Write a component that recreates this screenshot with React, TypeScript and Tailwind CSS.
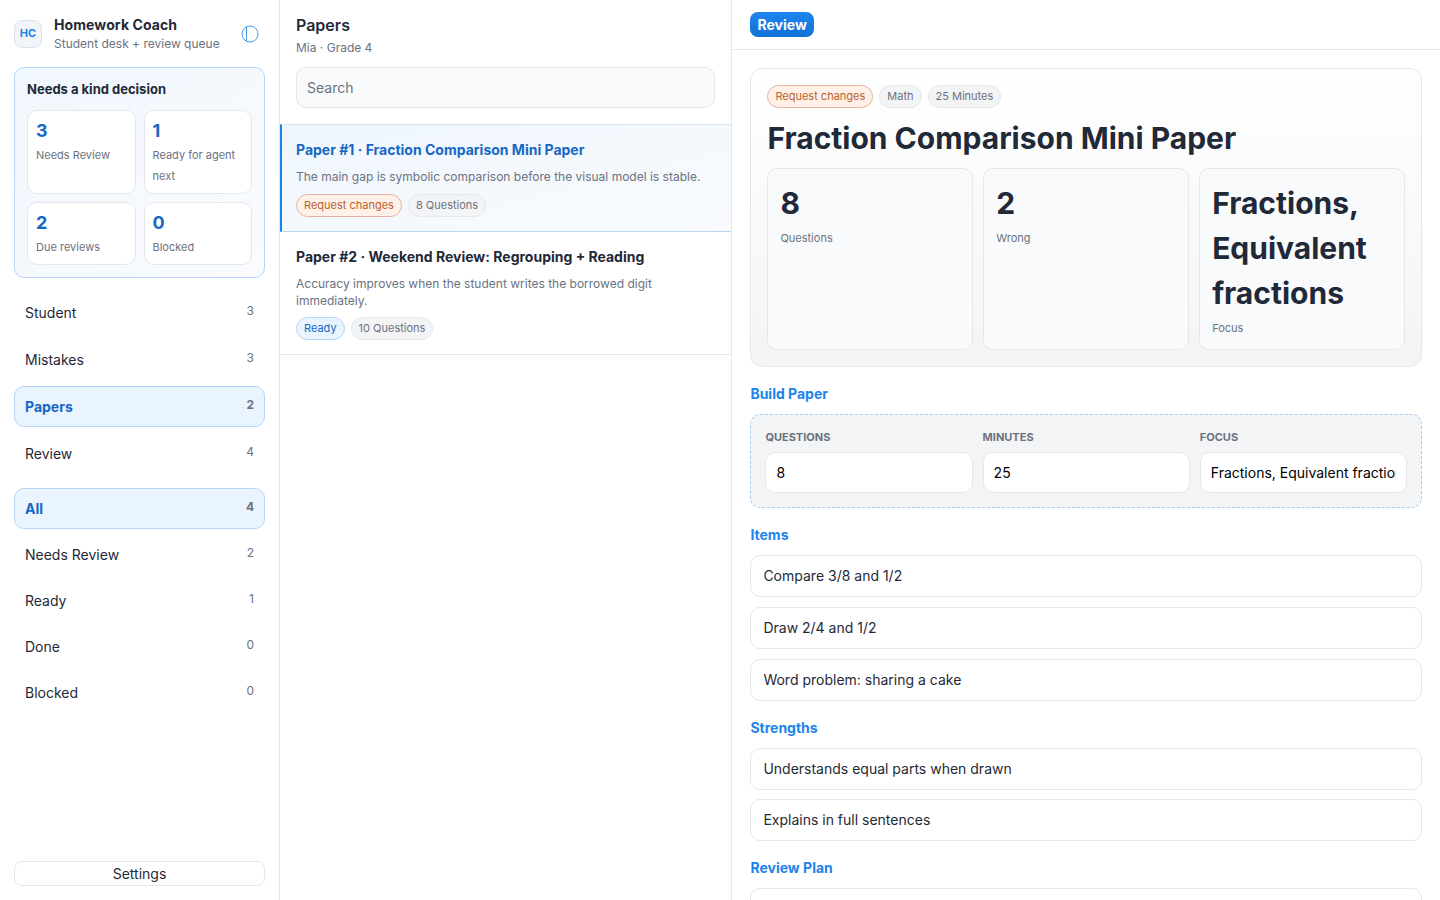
import React from "react";

function Pill({ children, tone = "gray" }: { children: React.ReactNode; tone?: "gray" | "orange" | "blue" }) {
  const cls =
    tone === "orange"
      ? "border-[#e3b3a0] bg-[#fff1e8] text-[#b8622f]"
      : tone === "blue"
        ? "border-[#b5d6f6] bg-[#eaf4fe] text-[#1668c4]"
        : "border-[#e5e7eb] bg-[#f3f4f6] text-[#6b7280]";
  return <span className={`inline-flex h-[23px] items-center rounded-full border px-[7px] text-[11px] leading-none ${cls}`}>{children}</span>;
}

function Stat({ n, label, tall = false }: { n: string; label: string; tall?: boolean }) {
  return (
    <div className={`rounded-[10px] border border-[#e5e7eb] bg-white px-2 pt-[7px] ${tall ? "h-[84px]" : "h-[63px]"}`}>
      <div className="text-[18px] font-bold leading-[26px] text-[#1668c4]">{n}</div>
      <div className="mt-[1px] text-[11px] leading-[21px] text-[#6b7280]">{label}</div>
    </div>
  );
}

function Nav({ label, count, active = false, small = false }: { label: string; count: number; active?: boolean; small?: boolean }) {
  return (
    <div
      className={`flex items-start justify-between rounded-[10px] border px-[10px] ${small ? "h-[40px] pt-[8px]" : "h-[41px] pt-[9px]"} ${
        active ? "border-[#b5d6f6] bg-[#eaf4fe]" : "border-transparent"
      }`}
    >
      <span className={`text-[14px] leading-[21px] ${active ? "font-bold text-[#1668c4]" : "text-[#1f2937]"}`}>{label}</span>
      <span className={`text-[12px] leading-[18px] text-[#6b7280] ${active ? "font-bold" : ""}`}>{count}</span>
    </div>
  );
}

function Metric({ value, label }: { value: string; label: string }) {
  return (
    <div className="rounded-[10px] border border-[#e5e7eb] bg-[#f9fafb] px-[12px] pb-[12px] pt-[12px]">
      <div className="text-[30px] font-bold leading-[45px] text-[#1f2937]">{value}</div>
      <div className="mt-[3px] text-[11px] leading-[18px] text-[#6b7280]">{label}</div>
    </div>
  );
}

function Field({ label, value }: { label: string; value: string }) {
  return (
    <div className="min-w-0">
      <div className="mb-[6px] text-[11px] font-bold uppercase leading-[17px] text-[#6b7280]">{label}</div>
      <input
        readOnly
        value={value}
        className="h-[41px] w-full rounded-[10px] border border-[#e5e7eb] bg-white px-[10px] text-[14px] text-black outline-none"
      />
    </div>
  );
}

function Heading({ children }: { children: React.ReactNode }) {
  return <div className="mb-[10px] mt-[17px] text-[14px] font-bold leading-[20px] text-[#1c84ec]">{children}</div>;
}

function Row({ children }: { children?: React.ReactNode }) {
  return (
    <div className="flex h-[42px] shrink-0 items-center rounded-[10px] border border-[#e5e7eb] bg-white px-[12px] pb-[2px] text-[14px] text-[#1f2937]">
      {children}
    </div>
  );
}

export default function App() {
  return (
    <div className="flex h-[900px] w-[1440px] overflow-hidden bg-white font-['Inter',sans-serif] text-[#1f2937]">
      {/* Sidebar */}
      <aside className="flex w-[280px] shrink-0 flex-col border-r border-[#e5e7eb] p-[14px]">
        <div className="flex h-[39px] items-center">
          <div className="flex h-[28px] w-[28px] shrink-0 items-center justify-center rounded-[8px] border border-[#d7e3ef] bg-[#f1f5f9] text-[11px] font-bold text-[#1f82e8]">
            HC
          </div>
          <div className="ml-[12px] min-w-0 flex-1">
            <div className="text-[14px] font-bold leading-[21px] tracking-[0.1px] text-[#1f2937]">Homework Coach</div>
            <div className="text-[12px] leading-[18px] text-[#6b7280]">Student desk + review queue</div>
          </div>
          <svg width="18" height="18" viewBox="0 0 18 18" fill="none" stroke="#4a9ae6" strokeWidth="1" className="mr-[6.5px]">
            <circle cx="9" cy="9" r="8" />
            <line x1="5.5" y1="1.8" x2="5.5" y2="16.2" />
          </svg>
        </div>

        <div className="mt-[14px] rounded-[10px] border border-[#b5d6f6] bg-gradient-to-br from-[#f1f7fe] to-[#f9fbfe] p-3">
          <div className="text-[13px] font-bold leading-[19px] text-[#1f2937]">Needs a kind decision</div>
          <div className="mt-[11px] grid grid-cols-2 gap-2">
            <Stat n="3" label="Needs Review" tall />
            <Stat n="1" label="Ready for agent next" tall />
            <Stat n="2" label="Due reviews" />
            <Stat n="0" label="Blocked" />
          </div>
        </div>

        <nav className="mt-[14px] flex flex-col gap-[6px]">
          <Nav label="Student" count={3} />
          <Nav label="Mistakes" count={3} />
          <Nav label="Papers" count={2} active />
          <Nav label="Review" count={4} />
        </nav>

        <div className="mt-[14px] flex flex-col gap-[6px]">
          <Nav label="All" count={4} active />
          <Nav label="Needs Review" count={2} small />
          <Nav label="Ready" count={1} small />
          <Nav label="Done" count={0} small />
          <Nav label="Blocked" count={0} small />
        </div>

        <button className="mt-auto h-[25px] w-full rounded-[8px] border border-[#e5e7eb] bg-white text-[14px] leading-none text-[#1f2937]">
          Settings
        </button>
      </aside>

      {/* List */}
      <section className="flex w-[452px] shrink-0 flex-col border-r border-[#e5e7eb]">
        <div className="px-[16px] pb-[16px] pt-[13px]">
          <div className="text-[16px] font-semibold leading-[24px] text-[#1f2937]">Papers</div>
          <div className="mt-[2px] text-[12px] leading-[18px] text-[#6b7280]">Mia · Grade 4</div>
          <div className="mt-[10px] flex h-[41px] items-center rounded-[10px] border border-[#e5e7eb] bg-[#f9fafb] px-[10px] text-[14px] text-[#6b7280]">
            Search
          </div>
        </div>
        <div className="h-[108px] border-b border-l-[2px] border-t border-b-[#b5d6f6] border-l-[#1f82e8] border-t-[#dbe4ee] bg-gradient-to-br from-[#eff6fe] to-[#f9fbfd] pl-[14px] pr-[16px] pt-[15px]">
          <div className="text-[14px] font-bold leading-[20px] text-[#1668c4]">Paper #1 · Fraction Comparison Mini Paper</div>
          <div className="mt-[8px] text-[12px] leading-[17px] text-[#6b7280]">The main gap is symbolic comparison before the visual model is stable.</div>
          <div className="mt-[9px] flex gap-[6px]">
            <Pill tone="orange">Request changes</Pill>
            <Pill>8 Questions</Pill>
          </div>
        </div>
        <div className="h-[123px] border-b border-[#e5e7eb] px-[16px] pt-[15px]">
          <div className="text-[14px] font-bold leading-[20px] text-[#1f2937]">Paper #2 · Weekend Review: Regrouping + Reading</div>
          <div className="mt-[8px] text-[12px] leading-[17px] text-[#6b7280]">Accuracy improves when the student writes the borrowed digit immediately.</div>
          <div className="mt-[8px] flex gap-[6px]">
            <Pill tone="blue">Ready</Pill>
            <Pill>10 Questions</Pill>
          </div>
        </div>
      </section>

      {/* Detail */}
      <main className="flex min-w-0 flex-1 flex-col overflow-hidden">
        <div className="flex h-[50px] shrink-0 items-center border-b border-[#e5e7eb] px-[18px]">
          <span className="flex h-[25px] items-center rounded-[8px] bg-gradient-to-b from-[#1c84ec] to-[#1272d8] px-[7.5px] text-[14px] font-bold text-white">
            Review
          </span>
        </div>
        <div className="flex flex-col pl-[18.4px] pr-[18px] pt-[18px]">
          <div className="rounded-[12px] border border-[#e5e7eb] bg-gradient-to-b from-white to-[#f3f4f6] px-[16px] pb-[16px] pt-[16px]">
            <div className="flex gap-[6px]">
              <Pill tone="orange">Request changes</Pill>
              <Pill>Math</Pill>
              <Pill>25 Minutes</Pill>
            </div>
            <h1 className="mt-[8px] text-[30px] font-bold leading-[45px] text-[#1f2937]">Fraction Comparison Mini Paper</h1>
            <div className="mt-[7px] grid grid-cols-3 gap-[10px]">
              <Metric value="8" label="Questions" />
              <Metric value="2" label="Wrong" />
              <Metric value="Fractions, Equivalent fractions" label="Focus" />
            </div>
          </div>

          <Heading>Build Paper</Heading>
          <div className="grid grid-cols-3 gap-[10px] rounded-[10px] border border-dashed border-[#a9cdee] bg-[#f3f4f6] p-[14px]">
            <Field label="Questions" value="8" />
            <Field label="Minutes" value="25" />
            <Field label="Focus" value="Fractions, Equivalent fractions" />
          </div>

          <Heading>Items</Heading>
          <div className="flex flex-col gap-[10px]">
            <Row>Compare 3/8 and 1/2</Row>
            <Row>Draw 2/4 and 1/2</Row>
            <Row>Word problem: sharing a cake</Row>
          </div>

          <Heading>Strengths</Heading>
          <div className="flex flex-col gap-[9px]">
            <Row>Understands equal parts when drawn</Row>
            <Row>Explains in full sentences</Row>
          </div>

          <Heading>Review Plan</Heading>
          <Row />
        </div>
      </main>
    </div>
  );
}
